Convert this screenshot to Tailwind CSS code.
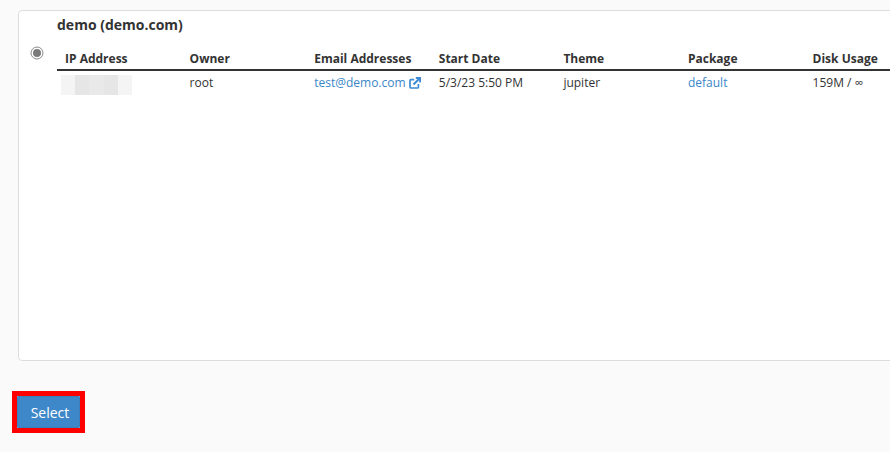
<!DOCTYPE html>
<html>
<head>
<meta charset="utf-8">
<script src="https://cdn.jsdelivr.net/npm/@tailwindcss/browser@4"></script>
</head>
<body class="m-0">
<div class="w-[890px] h-[452px] overflow-hidden bg-[#fafafa] font-['Open_Sans',sans-serif] text-[12px] text-[#333] pt-[10px] pl-[18px]">
  <div class="w-[900px] h-[351px] bg-white border border-[#ddd] rounded-[4px] flex">
    <div class="w-[38px] shrink-0 pt-[35px] pl-[12px]">
      <svg width="14" height="14" viewBox="0 0 14 14" class="block -ml-px"><circle cx="7" cy="7" r="6" fill="#fff" stroke="#8a8a8a" stroke-width="1"/><circle cx="7" cy="7" r="4" fill="#7a7a7a"/></svg>
    </div>
    <div class="flex-1 min-w-0">
      <div class="text-[14px] font-bold leading-[20px] pt-[4px] text-[#333]">demo (demo.com)</div>
      <div class="grid grid-cols-[124.6px_124.6px_124.6px_124.6px_124.6px_124.6px_124.6px] mt-[14px] h-[22px] border-b-2 border-[#333] font-bold leading-[20px]">
        <div class="pl-[8px]">IP Address</div>
        <div class="pl-[8px]">Owner</div>
        <div class="pl-[8px]">Email Addresses</div>
        <div class="pl-[8px]">Start Date</div>
        <div class="pl-[8px]">Theme</div>
        <div class="pl-[8px]">Package</div>
        <div class="pl-[8px]">Disk Usage</div>
      </div>
      <div class="grid grid-cols-[124.6px_124.6px_124.6px_124.6px_124.6px_124.6px_124.6px] items-start leading-[20px] pt-[2px]">
        <div class="pl-[4px] pt-[2px]">
          <div class="flex w-[71px] h-[20px]">
            <div class="w-[14px] bg-[#f4f4f4]"></div>
            <div class="w-[14px] bg-[#e6e6e6]"></div>
            <div class="w-[15px] bg-[#e9e9e9]"></div>
            <div class="w-[14px] bg-[#e6e6e6]"></div>
            <div class="w-[14px] bg-[#f4f4f4]"></div>
          </div>
        </div>
        <div class="pl-[8px]">root</div>
        <div class="pl-[8px] h-[20px] flex items-center text-[#3a87c8]">test@demo.com
          <svg width="12" height="12" viewBox="0 0 12 12" class="ml-[3px]" fill="none" stroke="#3d8bd4" stroke-width="1.7"><path d="M9.4 7v3a1 1 0 0 1-1 1H2a1 1 0 0 1-1-1V3.6a1 1 0 0 1 1-1h3.2"/><path d="M4.5 7.5L10.5 1.5M6.8 1h4.4v4.4" stroke-width="2"/></svg>
        </div>
        <div class="pl-[8px]">5/3/23 5:50 PM</div>
        <div class="pl-[8px]">jupiter</div>
        <div class="pl-[8px] text-[#3a87c8]">default</div>
        <div class="pl-[8px]">159M / ∞</div>
      </div>
    </div>
  </div>
  <div class="mt-[30px] -ml-[6px] w-[73px] h-[42px] border-[5px] border-[#ff0000]">
    <button class="block w-[63px] h-[32px] pl-[3px] pt-[1px] bg-[#3e87c9] text-white text-[14px] leading-[20px] rounded-[1px] border border-[#3b7fbd]">Select</button>
  </div>
</div>
</body>
</html>
